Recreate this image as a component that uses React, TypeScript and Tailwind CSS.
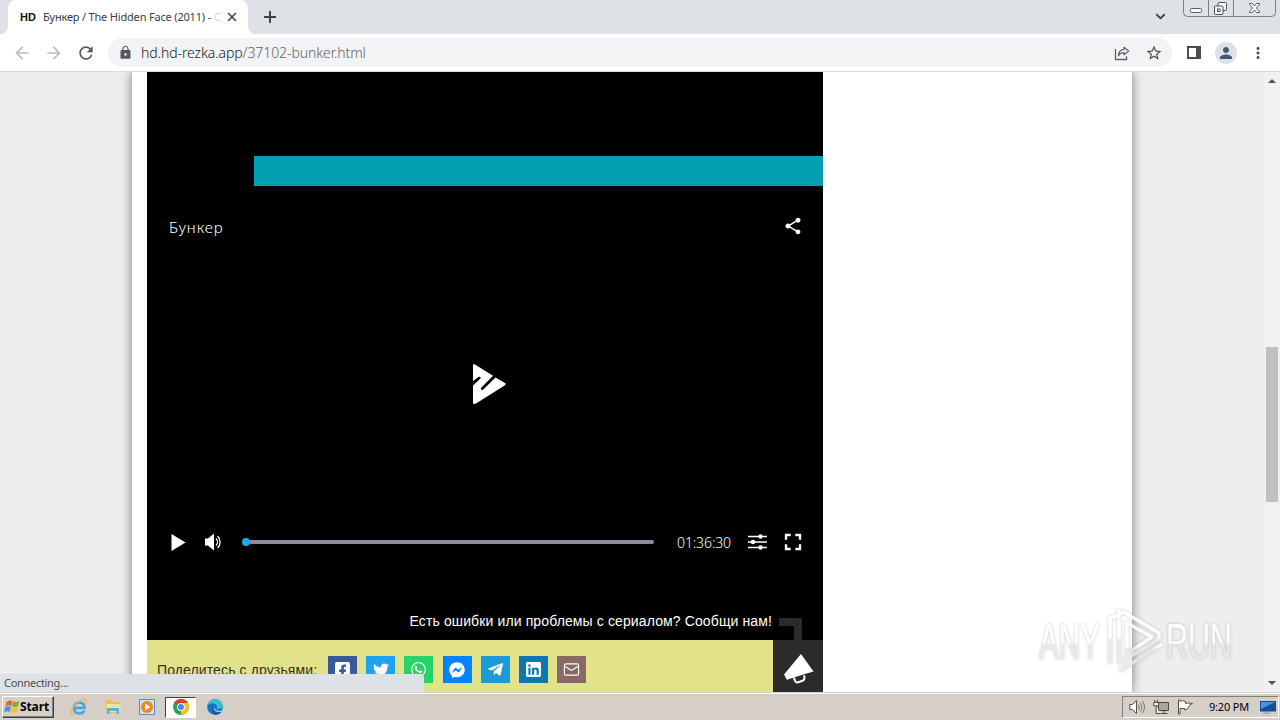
import * as React from 'react';
import {
  MdArrowBack,
  MdArrowForward,
  MdRefresh,
  MdLock,
  MdStarBorder,
  MdPerson,
  MdMoreVert,
  MdShare,
  MdFullscreen,
} from 'react-icons/md';
import {
  FaFacebookSquare,
  FaTwitter,
  FaWhatsapp,
  FaFacebookMessenger,
  FaTelegramPlane,
  FaLinkedin,
} from 'react-icons/fa';
import { X, Plus, Mail, ChevronDown } from 'lucide-react';

const shareButtons = [
  { name: 'Facebook', color: 'bg-[#3b5998]', icon: <FaFacebookSquare size={17} /> },
  { name: 'Twitter', color: 'bg-[#1da1f2]', icon: <FaTwitter size={16} /> },
  { name: 'WhatsApp', color: 'bg-[#25d366]', icon: <FaWhatsapp size={17} /> },
  { name: 'Messenger', color: 'bg-[#0084ff]', icon: <FaFacebookMessenger size={16} /> },
  { name: 'Telegram', color: 'bg-[#1c9ad8]', icon: <FaTelegramPlane size={17} /> },
  { name: 'LinkedIn', color: 'bg-[#0f77b0]', icon: <FaLinkedin size={17} /> },
  { name: 'Email', color: 'bg-[#8a6865]', icon: <Mail size={17} strokeWidth={1.6} /> },
];

const WindowButtons: React.FC = () => (
  <svg width="93" height="17" viewBox="0 0 93 17" fill="none" stroke="#7b7f88">
    <path d="M.5 0v12.500a4 4 0 0 0 4 4h84a4 4 0 0 0 4-4V0M25.500 0v16.500M50.500 0v16.500" />
    <rect x="7.500" y="8.500" width="11" height="4" rx="1" fill="#f6f7f9" stroke="#5a5e66" />
    <g stroke="#4c5058">
      <rect x="35" y="2.500" width="8.500" height="8" rx="1" fill="#f6f7f9" />
      <rect x="31.500" y="6" width="8.500" height="8.500" rx="1" fill="#f6f7f9" />
      <rect x="34.500" y="9" width="2.500" height="2.500" />
    </g>
    <path
      d="M66.500 3.500h3l2 2.500 2-2.500h3v1.200L73.300 8l3.200 3.300v1.200h-3l-2-2.500-2 2.500h-3v-1.200L69.700 8l-3.200-3.300z"
      fill="#f6f7f9"
      stroke="#5a5e66"
    />
  </svg>
);

const TabStrip: React.FC = () => (
  <div className="flex h-[34px] items-start bg-[#dee1e6] pl-2">
    <div className="relative flex h-[34px] w-[240px] items-center rounded-t-lg bg-white pl-3">
      <span className="w-[23px] shrink-0 font-['Liberation_Sans',sans-serif] text-[11px] font-bold text-[#111]">HD</span>
      <span className="w-[176px] whitespace-nowrap font-['Noto_Sans',sans-serif] text-[11px] tracking-[-0.18px] text-[#3c4043]">
        Бункер / The Hidden Face (2011) - <span className="text-[#d5d6d8]">С</span>
      </span>
      <X size={14} strokeWidth={2.800} className="ml-[6px] shrink-0 text-[#45484d]" />
      <span className="absolute bottom-0 -left-2 size-2 bg-[radial-gradient(circle_at_0_0,transparent_8px,#fff_8px)]" />
      <span className="absolute bottom-0 -right-2 size-2 bg-[radial-gradient(circle_at_100%_0,transparent_8px,#fff_8px)]" />
    </div>
    <Plus size={18} strokeWidth={2.6} className="mt-2 ml-[13px] text-[#3c4043]" />
    <div className="grow" />
    <ChevronDown size={15} strokeWidth={3} className="mt-[9px] mr-[15px] text-[#3c4043]" />
    <div className="mr-[4px]">
      <WindowButtons />
    </div>
  </div>
);

const Toolbar: React.FC = () => (
  <div className="flex h-[38px] items-center border-b border-[#d8dade] bg-white">
    <MdArrowBack size={20} className="ml-3 text-[#bcbec1]" />
    <MdArrowForward size={20} className="ml-3 text-[#bcbec1]" />
    <MdRefresh size={20} className="ml-3 text-[#55585c]" />
    <div className="ml-3 flex h-[29px] w-[1064px] items-center rounded-full bg-[#f1f3f4] pl-[10px]">
      <MdLock size={15} className="mr-[8px] text-[#55585c]" />
      <span className="whitespace-nowrap font-['Noto_Sans',sans-serif] text-[14px] font-light tracking-[-0.08px] text-[#202124]">
        hd.hd-rezka.app<span className="text-[#5f6368]">/37102-bunker.html</span>
      </span>
      <div className="grow" />
      <svg width="16" height="16" viewBox="0 0 16 16" fill="none" stroke="#5f6368" strokeWidth="1.3" className="mr-[15px]">
        <path d="M1.500 4v10.500h11v-3.200" />
        <path d="M10 2.300l4.600 3.700-4.600 3.700V7.600C7.200 7.600 5.600 8.800 4.500 10.800 4.600 7.300 6.500 4.600 10 4.300z" strokeLinejoin="round" />
      </svg>
      <MdStarBorder size={18} className="mr-[9px] text-[#4b4e53]" />
    </div>
    <span className="ml-[15px] h-[13px] w-[14px] border-2 border-r-[5px] border-[#4b4e53]" />
    <span className="ml-[14px] flex size-[22px] items-center justify-center rounded-full bg-[#dde1e8]">
      <MdPerson size={18} className="text-[#49546e]" />
    </span>
    <MdMoreVert size={18} className="ml-[12px] text-[#4b4e53]" />
  </div>
);

const Player: React.FC = () => (
  <div className="flex h-[568px] flex-col bg-black text-white">
    <div className="mt-[84px] ml-[107px] h-[30px] bg-[#029fb2]" />
    <div className="mt-[30px] flex h-6 items-center justify-between pr-[20px] pl-[21px]">
      <span className="mb-[2px] ml-px font-['Noto_Sans',sans-serif] text-[15px] font-light tracking-[0.95px]">Бункер</span>
      <MdShare size={20} className="mb-1" />
    </div>
    <div className="mt-[124px] flex h-[40px] pl-[325px]">
      <svg width="35" height="40" viewBox="0 0 35 40" fill="#fff">
        <path d="M1 0.500Q2 0 3 .6L21 11.800 9 24Q8.500 26.500 11 25.800L23.500 13.500 33 19Q34.500 20 33 21.300L4 39.500Q1.200 41 1 38.500V21.500L8.500 14.500Q9 12.500 7 12.800L1 17z" />
      </svg>
    </div>
    <div className="mt-[122px] flex h-8 items-center">
      <svg width="15" height="17" viewBox="0 0 15 17" fill="#fff" className="ml-[24px]">
        <path d="M.5 0L14.500 8.500.5 17z" />
      </svg>
      <svg width="18" height="18" viewBox="0 0 18 18" className="ml-[18px]">
        <path d="M1 5.500h3L10 .5v17L4 12.500H1z" fill="#fff" />
        <path d="M12 5.500a5 5 0 0 1 0 7M13.500 3a8.200 8.200 0 0 1 0 12" fill="none" stroke="#fff" strokeWidth="1.300" />
      </svg>
      <div className="ml-[20px] flex h-2 w-[413px] items-center">
        <span className="size-2 shrink-0 rounded-full bg-[#1fa8f3]" />
        <span className="h-1 w-[404px] rounded-r-full bg-[#8b8e99]" />
      </div>
      <span className="mt-px ml-[22px] w-[55px] whitespace-nowrap font-['Noto_Sans',sans-serif] text-[14px] font-light tracking-[-0.1px]">
        01:36:30
      </span>
      <svg width="19" height="16" viewBox="0 0 19 16" fill="#fff" className="ml-[16px]">
        <path d="M0 1.700h19v1.600H0zM0 7.200h19v1.600H0zM0 12.700h19v1.600H0z" />
        <circle cx="12.500" cy="2.500" r="2.200" />
        <circle cx="5" cy="8" r="2.200" />
        <circle cx="12.500" cy="13.500" r="2.200" />
      </svg>
      <MdFullscreen size={28} className="ml-[12px]" />
    </div>
    <div className="mt-[50px] flex grow justify-end">
      <span className="mt-[5px] mr-[7px] whitespace-nowrap font-['Liberation_Sans',sans-serif] text-[14px] leading-4 tracking-[0.12px]">
        Есть ошибки или проблемы с сериалом? Сообщи нам!
      </span>
      <span className="mt-[10px] mr-[21px] w-[23px] border-t-8 border-r-8 border-[#2b2b2b]" />
    </div>
  </div>
);

const ShareBar: React.FC = () => (
  <div className="flex h-[52px] bg-[#e2e28a]">
    <span className="mt-[21px] w-[181px] pl-[10px] whitespace-nowrap font-['Liberation_Sans',sans-serif] text-[14px] leading-[18px] tracking-[0.12px] text-[#333322]">
      Поделитесь с друзьями:
    </span>
    <div className="mt-4 flex gap-[9.200px]">
      {shareButtons.map((button) => (
        <span
          key={button.name}
          className={`flex h-[27px] w-[29px] items-center justify-center text-white ${button.color}`}
        >
          {button.icon}
        </span>
      ))}
    </div>
    <div className="grow" />
    <div className="flex w-[50px] items-center justify-center bg-[#2b2b2b]">
      <svg width="30" height="30" viewBox="0 0 30 30" className="mt-[6px] ml-px">
        <path d="M17 0L29.500 17.500 21 20 5 25 3 26 0 20.500z" fill="#fff" />
        <path d="M10 23.500q1 5.500 3.500 5l5-1.700q3-1 1.500-5.500" fill="none" stroke="#fff" strokeWidth="2" />
      </svg>
    </div>
  </div>
);

const Watermark: React.FC = () => (
  <svg width="220" height="80" viewBox="0 0 220 80" className="absolute top-[604px] left-[1036px] opacity-85">
    <defs>
      <linearGradient id="wm" x1="0" y1="0" x2="0" y2="1">
        <stop offset="0.500" stopColor="#fff" />
        <stop offset="0.560" stopColor="#e6e6e6" />
      </linearGradient>
      <filter id="glow" x="-10%" y="-20%" width="120%" height="140%">
        <feDropShadow dx="0" dy="0" stdDeviation="1.500" floodColor="#777" floodOpacity="0.500" />
      </filter>
    </defs>
    <g filter="url(#glow)" fill="url(#wm)">
      <text x="3" y="55" fontFamily="Liberation Sans Narrow, Liberation Sans, sans-serif" fontSize="50" textLength="61" lengthAdjust="spacingAndGlyphs">
        ANY
      </text>
      <text x="130" y="55" fontFamily="Liberation Sans Narrow, Liberation Sans, sans-serif" fontSize="50" textLength="66" lengthAdjust="spacingAndGlyphs">
        RUN
      </text>
      <g fill="none" stroke="url(#wm)" strokeWidth="3.500" strokeLinejoin="round" strokeLinecap="round">
        <path d="M74 58V14l6-2M83 7v52l40-24v-6L88 8l-5 2" />
        <path d="M91 19v31l25-17zM85 66l40-25" />
      </g>
    </g>
  </svg>
);

const Taskbar: React.FC = () => (
  <div className="flex h-[28px] items-center border-t border-[#d4d0c8] bg-[#d5cfc7] text-black shadow-[inset_0_1px_0_#fff]">
    <div className="mt-[1px] ml-[2px] flex h-[22px] w-[52px] items-center border border-t-white border-r-[#404040] border-b-[#404040] border-l-white pl-px shadow-[inset_-1px_-1px_0_#808080]">
      <svg width="16" height="16" viewBox="0 0 16 16">
        <path d="M2.500 3Q5 .5 8.500 2L7.300 7Q4.500 5.500 1.200 7.500z" fill="#e8602c" />
        <path d="M9.300 2.300Q12 4 15.500 2L14 7.300Q11 9 8 7.500z" fill="#76b52f" />
        <path d="M1 8.500Q4 6.500 7 8L5.600 13Q3 11.500 0 13.500z" fill="#4291da" />
        <path d="M7.800 8.500Q10.500 9.800 13.800 8.200L12.500 13Q9 15.200 6.300 13.500z" fill="#f6bd2e" />
      </svg>
      <span className="font-['Open_Sans',sans-serif] text-[12px] font-bold tracking-[-0.1px]">Start</span>
    </div>
    <svg width="18" height="18" viewBox="0 0 18 18" fill="none" className="mt-[1px] ml-[16px]">
      <path d="M4 10h10.500q0-5.500-5.300-5.500T4 10t5.400 5.500q3.600 0 4.800-2.800" stroke="#45a5e4" strokeWidth="2.600" />
      <path d="M15.500 5.500Q17.500 0 13 1.500 5 4 1.500 12.500q-1.500 5 3 3.500" stroke="#e5b949" strokeWidth="1.300" />
    </svg>
    <svg width="18" height="18" viewBox="0 0 18 18" className="mt-[1px] ml-[16px]">
      <path d="M1.500 3l1-1h5l1.500 2h6.500v11h-14z" fill="#e9bd57" />
      <path d="M2.500 6h14v8h-14z" fill="#f9e296" />
      <path d="M3 16v-6h12v6h-2.500v-3h-7v3z" fill="#5eafd6" />
    </svg>
    <svg width="16" height="16" viewBox="0 0 16 16" className="mt-[1px] ml-[17px]">
      <path d="M.5.5h15v15H.5z" fill="#cce2f5" stroke="#5591c9" />
      <circle cx="8" cy="8" r="6" fill="#ef8420" />
      <path d="M6 4.500v7L11.500 8z" fill="#fff" />
    </svg>
    <span className="mt-[1px] ml-[10px] flex h-[21px] w-[31px] items-center justify-center border border-t-[#404040] border-r-white border-b-white border-l-[#404040] bg-white">
      <svg width="16" height="16" viewBox="0 0 16 16">
        <circle cx="8" cy="8" r="8" fill="#2ea24c" />
        <path d="M8 8L1.100 4A8 8 0 0 1 14.900 4z" fill="#e33b2e" />
        <path d="M8 8L8 4h6.900A8 8 0 0 1 8 16z" fill="#fbc116" />
        <circle cx="8" cy="8" r="3.900" fill="#fff" />
        <circle cx="8" cy="8" r="3" fill="#4285f4" />
      </svg>
    </span>
    <svg width="16" height="16" viewBox="0 0 16 16" className="mt-[1px] ml-[11px]">
      <circle cx="8" cy="8" r="7.800" fill="#1474c8" />
      <path d="M.5 6.500Q2 .5 8 .2q7.500.3 7.800 6.300-.3 3.500-4.500 3.600-2.300-.3-1.300-2Q10.300 5 6.500 4.400 2.500 4 .5 6.500z" fill="#39bfc6" />
      <path d="M7 7q-2 4 1.500 6.300Q12 14.500 15 12q-2 4-7 3.800Q3 13 7 7z" fill="#155599" />
      <path d="M7.500 7.500q-.5 3.500 3.500 4.300 2.500.5 5-.8v1q-3 1.800-6.500.5Q6 11 7.500 7.500z" fill="#d5cfc7" />
    </svg>
    <div className="grow" />
    <div className="mt-[1px] mr-px flex h-[22px] w-[157px] items-center border border-t-[#808080] border-r-white border-b-white border-l-[#808080] pl-[6px]">
      <svg width="17" height="16" viewBox="0 0 17 16" fill="#fff" stroke="#55524d">
        <path d="M.8 5.500h2.700L7.500 1.500v13l-4-4H.8z" />
        <path d="M9.500 5.500q1.500 2.500 0 5M11.500 3.700q2.800 4.300 0 8.600M13.500 2q4 6 0 12" fill="none" stroke="#77736d" />
      </svg>
      <svg width="17" height="16" viewBox="0 0 17 16" fill="none" stroke="#4b4843" className="ml-[7px]">
        <path d="M5.500 3.500h10v8h-10z" fill="#aaa69f" />
        <path d="M7.500 14.500h7M11 11.500v3" />
        <path d="M.8 3.500h4.700v3.300H.8zM1.800 1v2.500M4.500 1v2.500M3.200 7v7.500H7" fill="#fff" />
      </svg>
      <svg width="17" height="16" viewBox="0 0 17 16" fill="#fff" stroke="#55524d" className="ml-[7px]">
        <path d="M1.500 1v14H3V9.500h4.500V11Q11 11 13 5.500 15 5 15.500 4.500 11 3.500 8.500 4.500V2.500Q6 1 3 2.200V1z" />
      </svg>
      <span className="ml-[15px] w-[41px] whitespace-nowrap font-['Noto_Sans',sans-serif] text-[11px] tracking-[-0.2px]">9:20 PM</span>
      <svg width="16" height="15" viewBox="0 0 16 15" className="ml-[10px]">
        <path d="M0 1h16v10.500H0z" fill="#154d9d" />
        <path d="M1 2h14L1 9z" fill="#4a94df" />
        <path d="M3 12.500h7v1.500H3z" fill="#8badd0" />
      </svg>
    </div>
  </div>
);

const App: React.FC = () => {
  return (
    <div className="relative flex h-[720px] w-[1280px] flex-col overflow-hidden bg-[#eee]">
      <TabStrip />
      <Toolbar />
      <div className="relative flex h-[620px] overflow-hidden">
        <div className="w-[132px] shrink-0 bg-[#eee]" />
        <main className="w-[1000px] shrink-0 bg-white px-[15px] shadow-[0_0_10px_rgba(0,0,0,0.5)]">
          <div className="w-[676px]">
            <Player />
            <ShareBar />
          </div>
        </main>
        <div className="grow" />
        <div className="relative flex w-4 flex-col items-center bg-[#f1f1f1]">
          <svg width="8" height="4" viewBox="0 0 8 4" fill="#505050" className="mt-[7px]">
            <path d="M4 0l4 4H0z" />
          </svg>
          <span className="mt-[264px] h-[155px] w-3 bg-[#c1c1c1]" />
          <div className="grow" />
          <svg width="8" height="4" viewBox="0 0 8 4" fill="#505050" className="mb-[7px]">
            <path d="M0 0h8L4 4z" />
          </svg>
        </div>
        {/* Loading status bubble */}
        <div className="absolute bottom-0 left-0 h-[18px] w-[424px] rounded-tr-[3px] bg-[#dee1e6] pl-[4px] font-['Noto_Sans',sans-serif] text-[11px] leading-[18px] tracking-[-0.3px] text-[#4a4d52] shadow-[0_0_1px_#999]">
          Connecting...
        </div>
      </div>
      <Taskbar />
      <Watermark />
    </div>
  );
};

export default App;
